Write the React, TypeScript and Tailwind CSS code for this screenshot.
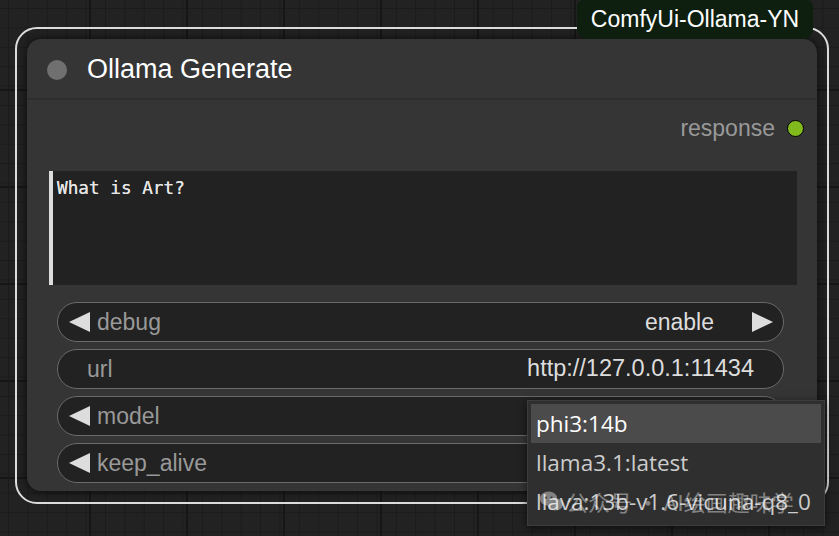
import React from "react";

const sans = "font-['Liberation_Sans',Arial,sans-serif]";

const LeftArrow = () => (
    <svg width="21" height="20" viewBox="0 0 21 20" className="shrink-0">
        <polygon points="21,0 21,20 0,10" fill="#dddddd" />
    </svg>
);

const RightArrow = () => (
    <svg width="21" height="20" viewBox="0 0 21 20" className="shrink-0">
        <polygon points="0,0 0,20 21,10" fill="#dddddd" />
    </svg>
);

const ComboWidget = (props: { label: string; value: string }) => (
    <div className="flex items-center h-[40px] rounded-full border-[1.5px] border-[#6a6a6a] bg-[#222222] pl-[11px] pr-[10px]">
        <LeftArrow />
        <span className="ml-[7px] text-[23px] text-[#999999]">{props.label}</span>
        <span className="ml-auto mr-[38px] text-[23px] text-[#dddddd]">{props.value}</span>
        <RightArrow />
    </div>
);

const TextWidget = (props: { label: string; value: string }) => (
    <div className="flex items-center h-[40px] rounded-full border-[1.5px] border-[#6a6a6a] bg-[#222222] pl-[29px] pr-[29px]">
        <span className="text-[23px] text-[#999999]">{props.label}</span>
        <span className="ml-auto text-[23.5px] text-[#dddddd]">{props.value}</span>
    </div>
);

const menuItems = ["phi3:14b", "llama3.1:latest", "llava:13b-v1.6-vicuna-q8_0"];

export default function App() {
    return (
        <div
            className={`relative w-[839px] h-[536px] overflow-hidden bg-[#222222] ${sans} bg-[linear-gradient(to_right,#161616_2px,transparent_2px),linear-gradient(to_bottom,#161616_2px,transparent_2px),linear-gradient(to_right,#1b1b1b_1px,transparent_1px),linear-gradient(to_bottom,#1b1b1b_1px,transparent_1px)] bg-[size:97px_97px,97px_97px,19.4px_19.4px,19.4px_19.4px] bg-[position:-8px_-8px,-8px_-8px,8px_8px,8px_8px]`}
        >
            {/* selection outline */}
            <div className="absolute left-[15px] top-[27px] w-[814px] h-[477px] rounded-[22px] border-2 border-[#dcdcdc]" />

            {/* node */}
            <div className="absolute left-[27px] top-[39px] w-[790px] h-[452px] rounded-[14px] bg-[#353535] shadow-[0_0_10px_rgba(0,0,0,0.7)] flex flex-col">
                <div className="h-[61px] shrink-0 flex items-center pl-[20px] pt-[2px] border-b-2 border-[#2e2e2e]">
                    <div className="w-[20px] h-[20px] rounded-full bg-[#707070]" />
                    <span className="ml-[20px] text-[27px] text-white">Ollama Generate</span>
                </div>

                <div className="mt-[16px] h-[24px] flex items-center justify-end pr-[13px]">
                    <span className="text-[23px] text-[#999999]">response</span>
                    <div className="ml-[12px] w-[17px] h-[17px] rounded-full bg-[#80ba1c] border-[1.5px] border-black" />
                </div>

                <div className="mt-[31px] ml-[22px] mr-[20px] h-[114px] bg-[#222222] border-l-4 border-[#dddddd] pl-[4px] pt-[4px]">
                    <span className="font-['DejaVu_Sans_Mono',monospace] text-[17.7px] text-[#e6e6e6] [text-shadow:0_0_0.4px_#e6e6e6]">What is Art?</span>
                </div>

                <div className="mt-[17px] pl-[30px] pr-[33px] flex flex-col gap-[7px]">
                    <ComboWidget label="debug" value="enable" />
                    <TextWidget label="url" value="http://127.0.0.1:11434" />
                    <ComboWidget label="model" value="phi3:14b" />
                    <ComboWidget label="keep_alive" value="5m" />
                </div>
            </div>

            {/* badge */}
            <div className="absolute left-[577px] top-0 w-[236px] h-[39px] rounded-b-[10px] rounded-t-[6px] bg-[#0e1e0f] flex items-center justify-center">
                <span className="text-[23px] text-white">ComfyUi-Ollama-YN</span>
            </div>

            {/* context menu */}
            <div className="absolute left-[527px] top-[400px] w-[298px] h-[126px] bg-[#2f2f2f] border border-[#3c3c3c] shadow-[0_2px_8px_rgba(0,0,0,0.6)] p-[3px] font-['Open_Sans','Noto_Sans',sans-serif]">
                {menuItems.map((item, index) => (
                    <div
                        key={item}
                        className={`h-[39px] flex items-center pl-[5px] text-[22.5px] whitespace-nowrap ${index === 0 ? "bg-[#4b4b4b] text-white font-medium" : "text-[#cccccc]"}`}
                    >
                        {item}
                    </div>
                ))}
            </div>

            {/* watermark */}
            <div className="absolute left-[540px] top-[485px] flex items-center gap-[3px] opacity-40 pointer-events-none">
                <svg width="23" height="21" viewBox="0 0 24 22">
                    <ellipse cx="9" cy="8" rx="9" ry="7.5" fill="#ffffff" />
                    <ellipse cx="16" cy="14" rx="8" ry="6.5" fill="#ffffff" />
                    <circle cx="6" cy="7" r="1.2" fill="#333" />
                    <circle cx="12" cy="7" r="1.2" fill="#333" />
                </svg>
                <span className="text-[22px] text-white font-['Noto_Sans_CJK_SC',sans-serif]">公众号 · AI绘画趣味学</span>
            </div>
        </div>
    );
}
